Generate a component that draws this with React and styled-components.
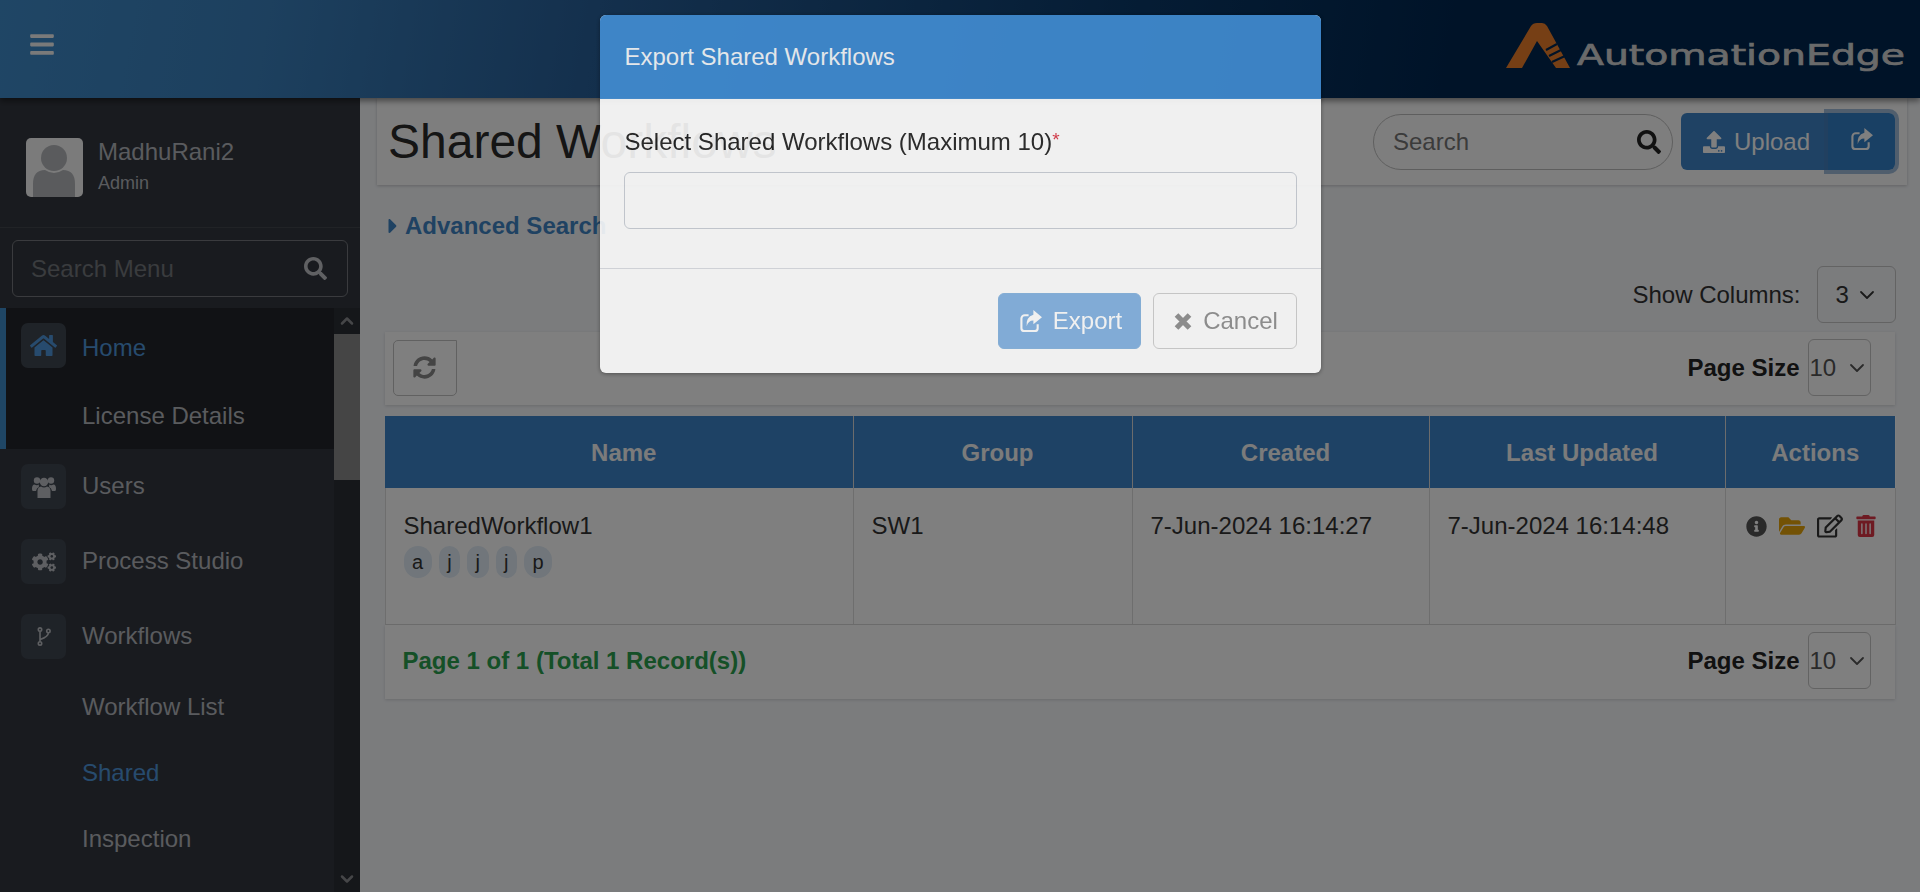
import styled, { createGlobalStyle } from 'styled-components'
import {
  FaBars, FaSearch, FaHome, FaCogs, FaUpload,
  FaSyncAlt, FaCaretRight, FaInfoCircle, FaFolderOpen, FaRegEdit, FaTrashAlt,
} from 'react-icons/fa'
import { ChevronDown, ChevronUp } from 'lucide-react'

const GlobalStyle = createGlobalStyle`
  * { box-sizing: border-box; }
  html, body { margin: 0; height: 100%; overflow: hidden; }
  body {
    font-family: "Liberation Sans", Arial, sans-serif;
    font-size: 24px;
    color: #333;
    background: #f6f8fb;
  }
`

const Page = styled.div`
  height: 892px;
  display: flex;
  flex-direction: column;
`

const TopBar = styled.header`
  height: 98px;
  flex: none;
  display: flex;
  align-items: center;
  justify-content: space-between;
  padding: 0 12px 0 30px;
  background: linear-gradient(100deg, #3f8ccb 0%, #3a80bd 14%, #28609a 31%, #0b3a6a 58%, #002650 76%, #002650 100%);
  box-shadow: 0 3px 6px rgba(0, 0, 0, 0.45);
  position: relative;
  z-index: 2;
  color: #fff;
  svg.menu { margin-top: -10px; font-size: 24px; width: 24px; height: 27px; color: #f4f4f4; }
`

const Columns = styled.div`
  flex: 1;
  display: flex;
  min-height: 0;
`

const Sidebar = styled.aside`
  width: 360px;
  flex: none;
  display: flex;
  flex-direction: column;
  background: #33373f;
  color: #b4b7bc;
`

const UserBox = styled.div`
  height: 130px;
  flex: none;
  display: flex;
  gap: 15px;
  padding: 40px 0 0 26px;
  border-bottom: 1px solid #42464d;
`

const Avatar = styled.div`
  width: 57px;
  height: 59px;
  border-radius: 5px;
  background: #f6f6f6;
  overflow: hidden;
`

const UserName = styled.div`
  font-size: 24px;
  line-height: 28px;
`

const UserRole = styled.div`
  font-size: 18px;
  line-height: 22px;
  margin-top: 6px;
`

const MenuSearch = styled.div`
  height: 57px;
  margin: 12px 12px 11px;
  padding: 0 20px 0 18px;
  display: flex;
  align-items: center;
  border: 1px solid #74777c;
  border-radius: 6px;
  color: #c0c2c6;
  font-size: 23px;
  flex: none;
`

const PlainInput = styled.input`
  flex: 1;
  min-width: 0;
  border: 0;
  outline: 0;
  padding: 0;
  background: transparent;
  font: inherit;
  font-size: 24px;
  color: inherit;
  &::placeholder { color: ${(p) => p.$hint}; opacity: 1; }
`

const MenuArea = styled.div`
  flex: 1;
  min-height: 0;
  display: flex;
  overflow: hidden;
`

const MenuList = styled.nav`
  flex: 1;
  min-width: 0;
`

const ActiveGroup = styled.div`
  background: #22252a;
  border-left: 6px solid #3f8ccb;
`

const MenuRow = styled.div`
  display: flex;
  align-items: center;
  height: 75px;
  padding-left: ${(p) => (p.$active ? '15px' : '21px')};
  gap: 16px;
  color: ${(p) => (p.$active ? '#4f97dc' : 'inherit')};
`

const MenuLabel = styled.span`
  margin-top: ${(p) => (p.$active ? 5 : -1)}px;
`

const IconTile = styled.span`
  width: 45px;
  height: 45px;
  border-radius: 7px;
  background: #3f4650;
  display: flex;
  align-items: center;
  justify-content: center;
  font-size: ${(p) => p.$size || 24}px;
  color: ${(p) => (p.$active ? '#4f97dc' : '#bcbfc4')};
`

const SubRow = styled.div`
  height: 66px;
  display: flex;
  align-items: center;
  padding-left: ${(p) => (p.$inGroup ? '76px' : '82px')};
  color: ${(p) => (p.$active ? '#4f97dc' : 'inherit')};
`

const ScrollRail = styled.div`
  width: 26px;
  flex: none;
  display: flex;
  flex-direction: column;
  background: #2b2e34;
  color: #8b8d90;
`

const RailArrow = styled.div`
  height: 26px;
  flex: none;
  display: flex;
  align-items: center;
  justify-content: center;
`

const RailThumb = styled.div`
  height: 146px;
  flex: none;
  background: #8a8a8a;
`

const RailGap = styled.div`
  flex: 1;
`

const Main = styled.main`
  flex: 1;
  min-width: 0;
  padding: 0 13px 0 17px;
`

const TitlePanel = styled.div`
  height: 87px;
  display: flex;
  align-items: center;
  padding: 0 12px 0 11px;
  background: #fdfdfd;
  box-shadow: 0 1px 3px rgba(0, 0, 0, 0.2);
`

const PageTitle = styled.h1`
  flex: 1;
  margin: 0;
  font-size: 48px;
  font-weight: 400;
  color: #2a2a2a;
`

const SearchPill = styled.div`
  width: 300px;
  height: 56px;
  display: flex;
  align-items: center;
  padding: 0 11px 0 19px;
  margin-right: 8px;
  border: 1px solid #bdbdbd;
  border-radius: 28px;
  color: #222;
`

const SplitGroup = styled.div`
  display: flex;
  height: 57px;
`

const UploadButton = styled.div`
  width: 147px;
  display: flex;
  align-items: center;
  gap: 9px;
  padding-left: 22px;
  background: #3e85c8;
  border-radius: 6px 0 0 6px;
  color: #fff;
  svg { font-size: 22px; }
`

const ShareButton = styled.div`
  width: 67px;
  display: flex;
  align-items: center;
  justify-content: center;
  padding-bottom: 6px;
  background: #3280c8;
  border-radius: 0 6px 6px 0;
  outline: 4px solid rgba(70, 125, 185, 0.5);
  color: #fff;
`

const Content = styled.div`
  padding: 0 12.5px 0 7.5px;
`

const AdvancedLink = styled.div`
  height: 81px;
  display: flex;
  align-items: center;
  margin-left: -3.5px;
  font-weight: 700;
  color: #3f85c5;
`

const ColumnsRow = styled.div`
  display: flex;
  justify-content: flex-end;
  align-items: center;
  gap: 16px;
  height: 57px;
  margin-right: -1px;
  color: #333;
`

const SelectBox = styled.div`
  width: ${(p) => p.$width}px;
  height: 57px;
  display: flex;
  align-items: center;
  justify-content: space-between;
  padding: ${(p) => (p.$tight ? '0 1px 0 1px' : '0 16px 0 18px')};
  border: 1px solid #c6c6c6;
  border-radius: 6px;
  font-weight: 400;
  color: ${(p) => (p.$tight ? '#555' : '#333')};
`

const ToolPanel = styled.div`
  height: 73px;
  margin-top: 9px;
  display: flex;
  align-items: center;
  padding: 0 24px 2px 8px;
  background: #fff;
  box-shadow: 0 1px 3px rgba(0, 0, 0, 0.14);
`

const RefreshButton = styled.div`
  width: 64px;
  height: 56px;
  display: flex;
  align-items: center;
  justify-content: center;
  border: 1px solid #c2c2c2;
  border-radius: 5px 0 5px 5px;
  color: #888;
  font-size: 23px;
`

const PageSize = styled.div`
  margin-left: auto;
  display: flex;
  align-items: center;
  gap: 8px;
  font-weight: 700;
  color: #222;
`

const Table = styled.table`
  width: 100%;
  margin-top: 11px;
  table-layout: fixed;
  border-collapse: collapse;
  background: #fff;
`

const HeadCell = styled.th`
  height: 72px;
  padding: 2px 0 0 10px;
  background: #3c85cb;
  color: #f6f6f6;
  font-weight: 700;
  border-left: 1px solid #d9d9d9;
  &:first-child { border-left: 0; }
`

const Cell = styled.td`
  height: 136px;
  padding: 23px 18px 0;
  vertical-align: top;
  line-height: 30px;
  border: 1px solid #dcdcdc;
  border-top: 0;
`

const ChipRow = styled.div`
  display: flex;
  gap: 7px;
  margin-top: 5px;
`

const Chip = styled.span`
  height: 32px;
  padding: 0 8.5px;
  border-radius: 16px;
  background: #e2edf7;
  font-size: 20px;
  line-height: 32px;
`

const ActionIcons = styled.div`
  display: flex;
  align-items: center;
  justify-content: center;
  gap: 12px;
  margin: 2px -9px 0 -6px;
`

const ActionIcon = styled.span`
  display: flex;
  font-size: ${(p) => p.$size}px;
  color: ${(p) => p.$color};
`

const FooterPanel = styled.div`
  height: 74px;
  display: flex;
  align-items: center;
  padding: 0 24px 2px 18px;
  background: #fff;
  box-shadow: 0 1px 3px rgba(0, 0, 0, 0.14);
`

const RecordCount = styled.div`
  font-weight: 700;
  color: #2aa04e;
`

const Backdrop = styled.div`
  position: fixed;
  inset: 0;
  z-index: 10;
  display: flex;
  justify-content: center;
  align-items: flex-start;
  padding-top: 15px;
  background: rgba(0, 0, 0, 0.5);
`

const Modal = styled.div`
  width: 721px;
  height: 358px;
  border-radius: 6px;
  overflow: hidden;
  background: #fff;
  opacity: 0.89;
  display: flex;
  flex-direction: column;
  box-shadow: 0 1px 4px rgba(0, 0, 0, 0.4);
`

const ModalHead = styled.div`
  height: 84px;
  flex: none;
  display: flex;
  align-items: center;
  padding: 0 25px;
  background: #4491d8;
  color: #fff;
`

const ModalBody = styled.div`
  height: 170px;
  flex: none;
  padding: 27px 24px 0;
  border-bottom: 1px solid #dadde2;
  color: #222;
`

const FieldLabel = styled.label`
  display: block;
  margin-left: 1px;
  line-height: 32px;
  sup { color: #dc3545; font-size: 19px; line-height: 0; vertical-align: 4px; }
`

const TextField = styled.input`
  display: block;
  width: 100%;
  height: 57px;
  margin-top: 14px;
  border: 1px solid #c9ced6;
  border-radius: 6px;
  background: transparent;
  outline: 0;
`

const ModalFoot = styled.div`
  flex: 1;
  display: flex;
  justify-content: flex-end;
  gap: 12px;
  padding: 24px 24px 0;
`

const ModalButton = styled.div`
  width: ${(p) => p.$width}px;
  height: 56px;
  display: flex;
  align-items: center;
  justify-content: center;
  gap: 11px;
  padding-left: 3px;
  border-radius: 6px;
  border: 1px solid ${(p) => (p.$primary ? '#86b4e0' : '#cfcfcf')};
  background: ${(p) => (p.$primary ? '#82b2e2' : 'transparent')};
  color: ${(p) => (p.$primary ? '#fff' : '#8f8f8f')};
`

const LogoWrap = styled.svg`
  display: block;
  margin-top: -3px;
`

const Logo = () => (
  <LogoWrap width="402" height="50" viewBox="0 0 402 50">
    <path d="M0 45 L25 3 Q27 0 31 0 L36 0 Q39 0 41 3 L64 45 L50 45 L31 18 L16 45 Z" fill="#ec7f2a" />
    <path d="M40 27 L51 21 M43 33 L55 27 M46 39 L59 33" stroke="#02264f" strokeWidth="2.2" />
    <text x="71" y="42" fontFamily="'DejaVu Sans', sans-serif" fontSize="28" fill="#d4d4d4" stroke="#d4d4d4" strokeWidth="0.7" textLength="328" lengthAdjust="spacingAndGlyphs">AutomationEdge</text>
  </LogoWrap>
)

const Person = () => (
  <svg width="57" height="59" viewBox="0 0 57 59">
    <circle cx="28" cy="20" r="13" fill="#b4b6ba" />
    <path d="M7 59 L7 46 Q7 32 19 32 Q28 38 37 32 Q49 32 49 46 L49 59 Z" fill="#b4b6ba" />
  </svg>
)

const UsersGlyph = () => (
  <svg width="24" height="22" viewBox="0 0 24 22" fill="currentColor">
    <circle cx="5" cy="4.5" r="3.2" />
    <circle cx="19" cy="4.5" r="3.2" />
    <circle cx="12" cy="6" r="4.2" />
    <path d="M5.5 22 V15 Q5.5 11 9 10.5 Q12 12.5 15 10.5 Q18.5 11 18.5 15 V22 Z" />
    <path d="M0 13 Q0 8.5 2.5 8.5 Q5 10 7 8.5 Q6.5 10 7 11 Q4.5 12 4 15 H1 Q0 15 0 13 Z" />
    <path d="M24 13 Q24 8.5 21.5 8.5 Q19 10 17 8.5 Q17.5 10 17 11 Q19.5 12 20 15 H23 Q24 15 24 13 Z" />
  </svg>
)

const ForkGlyph = () => (
  <svg width="14" height="19" viewBox="0 0 14 19" fill="none" stroke="currentColor" strokeWidth="1.6">
    <circle cx="3" cy="2.6" r="1.7" />
    <circle cx="3" cy="16.4" r="1.7" />
    <circle cx="11.4" cy="4" r="1.7" />
    <path d="M3 4.4 V14.6 M11.4 5.8 Q11.4 9.6 3.2 12.6" />
  </svg>
)

const ShareGlyph = () => (
  <svg width="23" height="22" viewBox="0 0 24 23">
    <path d="M10 5.5 H6 a3.5 3.5 0 0 0 -3.5 3.5 v10 a3 3 0 0 0 3 3 h11 a3 3 0 0 0 3 -3 v-4" fill="none" stroke="currentColor" strokeWidth="2.2" />
    <path d="M15 0 L24 7.5 L15 15 V11 Q9.5 11 8 17 Q7 7.5 15 5 Z" fill="currentColor" />
  </svg>
)

const TimesGlyph = () => (
  <svg width="18" height="17" viewBox="0 0 18 17" fill="none" stroke="currentColor" strokeWidth="5.2">
    <path d="M2.5 2 L15.5 15 M15.5 2 L2.5 15" />
  </svg>
)

const columns = [
  { label: 'Name', width: 468 },
  { label: 'Group', width: 279 },
  { label: 'Created', width: 297 },
  { label: 'Last Updated', width: 296 },
  { label: 'Actions', width: 170 },
]

const Select = ({ width, value, tight }) => (
  <SelectBox $width={width} $tight={tight}>
    {value}
    <ChevronDown size={24} strokeWidth={1.8} />
  </SelectBox>
)

const App = () => {
  return (
    <Page>
      <GlobalStyle />
      <TopBar>
        <FaBars className="menu" />
        <Logo />
      </TopBar>
      <Columns>
        <Sidebar>
          <UserBox>
            <Avatar><Person /></Avatar>
            <div>
              <UserName>MadhuRani2</UserName>
              <UserRole>Admin</UserRole>
            </div>
          </UserBox>
          <MenuSearch>
            <PlainInput placeholder="Search Menu" $hint="#74787d" />
            <FaSearch />
          </MenuSearch>
          <MenuArea>
            <MenuList>
              <ActiveGroup>
                <MenuRow $active>
                  <IconTile $active $size={27}><FaHome /></IconTile>
                  <MenuLabel $active>Home</MenuLabel>
                </MenuRow>
                <SubRow $inGroup>License Details</SubRow>
              </ActiveGroup>
              <MenuRow>
                <IconTile><UsersGlyph /></IconTile>
                <MenuLabel>Users</MenuLabel>
              </MenuRow>
              <MenuRow>
                <IconTile><FaCogs /></IconTile>
                <MenuLabel>Process Studio</MenuLabel>
              </MenuRow>
              <MenuRow>
                <IconTile><ForkGlyph /></IconTile>
                <MenuLabel>Workflows</MenuLabel>
              </MenuRow>
              <SubRow>Workflow List</SubRow>
              <SubRow $active>Shared</SubRow>
              <SubRow>Inspection</SubRow>
            </MenuList>
            <ScrollRail>
              <RailArrow><ChevronUp size={20} strokeWidth={3} /></RailArrow>
              <RailThumb />
              <RailGap />
              <RailArrow><ChevronDown size={20} strokeWidth={3} /></RailArrow>
            </ScrollRail>
          </MenuArea>
        </Sidebar>
        <Main>
          <TitlePanel>
            <PageTitle>Shared Workflows</PageTitle>
            <SearchPill>
              <PlainInput placeholder="Search" $hint="#777" />
              <FaSearch />
            </SearchPill>
            <SplitGroup>
              <UploadButton><FaUpload />Upload</UploadButton>
              <ShareButton><ShareGlyph /></ShareButton>
            </SplitGroup>
          </TitlePanel>
          <Content>
            <AdvancedLink><FaCaretRight />Advanced Search</AdvancedLink>
            <ColumnsRow>
              Show Columns:
              <Select width={79} value="3" />
            </ColumnsRow>
            <ToolPanel>
              <RefreshButton><FaSyncAlt /></RefreshButton>
              <PageSize>
                Page Size
                <Select width={63} value="10" tight />
              </PageSize>
            </ToolPanel>
            <Table>
              <colgroup>
                {columns.map((c) => <col key={c.label} width={c.width} />)}
              </colgroup>
              <thead>
                <tr>
                  {columns.map((c) => <HeadCell key={c.label}>{c.label}</HeadCell>)}
                </tr>
              </thead>
              <tbody>
                <tr>
                  <Cell>
                    SharedWorkflow1
                    <ChipRow>
                      {['a', 'j', 'j', 'j', 'p'].map((t, i) => <Chip key={i}>{t}</Chip>)}
                    </ChipRow>
                  </Cell>
                  <Cell>SW1</Cell>
                  <Cell>7-Jun-2024 16:14:27</Cell>
                  <Cell>7-Jun-2024 16:14:48</Cell>
                  <Cell>
                    <ActionIcons>
                      <ActionIcon $color="#555" $size={21}><FaInfoCircle /></ActionIcon>
                      <ActionIcon $color="#e6a50a" $size={26}><FaFolderOpen /></ActionIcon>
                      <ActionIcon $color="#333" $size={26}><FaRegEdit /></ActionIcon>
                      <ActionIcon $color="#dc3545" $size={22}><FaTrashAlt /></ActionIcon>
                    </ActionIcons>
                  </Cell>
                </tr>
              </tbody>
            </Table>
            <FooterPanel>
              <RecordCount>Page 1 of 1 (Total 1 Record(s))</RecordCount>
              <PageSize>
                Page Size
                <Select width={63} value="10" tight />
              </PageSize>
            </FooterPanel>
          </Content>
        </Main>
      </Columns>
      <Backdrop>
        <Modal>
          <ModalHead>Export Shared Workflows</ModalHead>
          <ModalBody>
            <FieldLabel>Select Shared Workflows (Maximum 10)<sup>*</sup></FieldLabel>
            <TextField />
          </ModalBody>
          <ModalFoot>
            <ModalButton $primary $width={143}><ShareGlyph />Export</ModalButton>
            <ModalButton $width={144}><TimesGlyph />Cancel</ModalButton>
          </ModalFoot>
        </Modal>
      </Backdrop>
    </Page>
  )
}

export default App
